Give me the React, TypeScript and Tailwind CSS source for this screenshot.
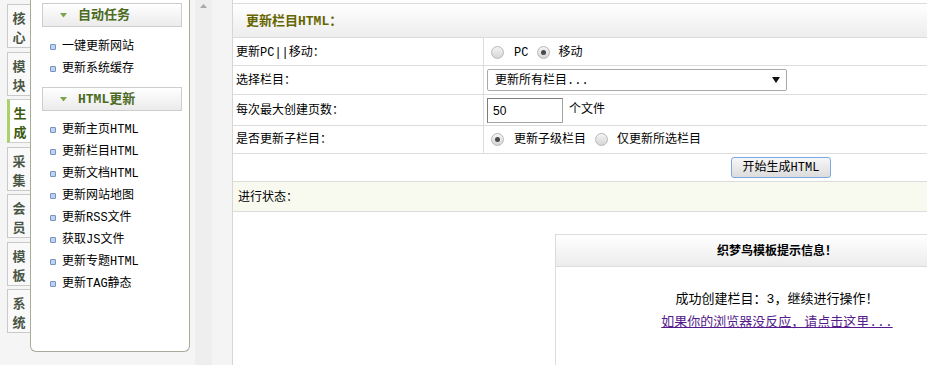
import React from 'react';

const tabs = [
  { label: ['核', '心'] },
  { label: ['模', '块'] },
  { label: ['生', '成'], active: true },
  { label: ['采', '集'] },
  { label: ['会', '员'] },
  { label: ['模', '板'] },
  { label: ['系', '统'] },
];

const autoTasks = ['一键更新网站', '更新系统缓存'];
const htmlTasks = [
  '更新主页HTML',
  '更新栏目HTML',
  '更新文档HTML',
  '更新网站地图',
  '更新RSS文件',
  '获取JS文件',
  '更新专题HTML',
  '更新TAG静态',
];

function Radio({ checked = false }: { checked?: boolean }) {
  return (
    <span className="inline-flex h-[13px] w-[13px] shrink-0 items-center justify-center rounded-full border border-[#b8b8b8] bg-linear-to-b from-[#f4f4f4] to-[#d6d6d6]">
      {checked && <span className="h-[5px] w-[5px] rounded-full bg-[#4a4a4a]" />}
    </span>
  );
}

function SectionHeader({ title }: { title: string }) {
  return (
    <div className="flex h-[24px] items-center gap-[11px] border border-[#cdcdcd] bg-linear-to-b from-white to-[#ebebeb] pl-[17px]">
      <svg width="7" height="5" viewBox="0 0 7 5">
        <path d="M0 0h7L3.5 4.5z" fill="#7aa34a" />
      </svg>
      <span className="pt-[1px] text-[13px] font-bold text-[#4b6b1e]">{title}</span>
    </div>
  );
}

function TaskList({ items }: { items: string[] }) {
  return (
    <ul>
      {items.map(item => (
        <li key={item} className="flex h-[22px] items-center gap-[6px] pl-[8px]">
          <span className="mt-[1px] h-[6px] w-[6px] rounded-[1px] border border-[#7893c0] bg-[#bdd3f3]" />
          <span className="pt-[2px]">{item}</span>
        </li>
      ))}
    </ul>
  );
}

export default function App() {
  return (
    <div className="flex h-[365px] w-[927px] overflow-hidden bg-[#f5f5f5] font-['Liberation_Mono','Noto_Sans_CJK_SC',monospace] text-[12px] text-black">
      {/* left tab strip */}
      <div className="flex w-[30px] shrink-0 flex-col gap-[3.5px] pt-[4px] pl-[7px]">
        {tabs.map(tab => (
          <div
            key={tab.label.join('')}
            className={
              tab.active
                ? 'flex h-[44px] flex-col items-center border border-r-0 border-l-[3px] border-[#cfcfcf] border-l-[#a8d36c] bg-white pt-[5px] text-[13px] leading-[19px] font-bold text-[#3c5a0e]'
                : 'flex h-[44px] flex-col items-center border border-r-0 border-[#c9c9c9] bg-[#f9f9f9] pt-[5px] text-[13px] leading-[19px] font-bold text-[#4a5646]'
            }
          >
            {tab.label.map(ch => (
              <span key={ch}>{ch}</span>
            ))}
          </div>
        ))}
      </div>

      {/* menu panel */}
      <div className="h-[352px] w-[160px] shrink-0 rounded-b-[6px] border border-t-0 border-[#a8ab9a] bg-white pt-[3px] pr-[7px] pl-[11px]">
        <SectionHeader title="自动任务" />
        <div className="mt-[8px]">
          <TaskList items={autoTasks} />
        </div>
        <div className="mt-[8px]">
          <SectionHeader title="HTML更新" />
        </div>
        <div className="mt-[7px]">
          <TaskList items={htmlTasks} />
        </div>
      </div>

      {/* frame gutter */}
      <div className="flex w-[42px] shrink-0">
        <div className="w-[5px]" />
        <div className="flex w-[17px] justify-center bg-[#eeeeee] pt-[4px]">
          <svg width="7" height="4" viewBox="0 0 7 4">
            <path d="M3.5 0L7 4H0z" fill="#a8a8a8" />
          </svg>
        </div>
        <div className="w-[20px] bg-[#f4f4f4]" />
      </div>

      {/* main content */}
      <div className="flex min-w-0 flex-1 flex-col overflow-hidden border-l border-[#d6d6d6] bg-white pt-[3px]">
        <div className="flex h-[35px] shrink-0 items-center border-y border-[#dcdcdc] bg-linear-to-b from-white to-[#ededed] pt-[2px] pl-[13px] text-[13px] font-bold text-[#666600]">
          更新栏目HTML：
        </div>

        <div className="flex h-[28px] shrink-0 border-b border-[#dcdcdc]">
          <div className="flex w-[251px] items-center border-r border-[#dcdcdc] pt-[2px] pl-[3px]">更新PC||移动：</div>
          <div className="flex items-center pt-[1px] pl-[7px]">
            <Radio />
            <span className="ml-[10px] pt-[1px]">PC</span>
            <span className="ml-[9px] flex">
              <Radio checked />
            </span>
            <span className="ml-[8px] pt-[1px]">移动</span>
          </div>
        </div>

        <div className="flex h-[29px] shrink-0 border-b border-[#dcdcdc]">
          <div className="flex w-[251px] items-center border-r border-[#dcdcdc] pt-[1px] pl-[3px]">选择栏目：</div>
          <div className="flex items-center pl-[3px]">
            <div className="flex h-[22px] w-[300px] items-center justify-between rounded-[2px] border border-[#a9a9a9] pr-[6px] pl-[7px]">
              <span className="pt-[1px]">更新所有栏目...</span>
              <svg width="8" height="6" viewBox="0 0 8 6">
                <path d="M0 0h8L4 6z" fill="#111" />
              </svg>
            </div>
          </div>
        </div>

        <div className="flex h-[31px] shrink-0 border-b border-[#dcdcdc]">
          <div className="flex w-[251px] items-center border-r border-[#dcdcdc] pt-[1px] pl-[3px]">每次最大创建页数：</div>
          <div className="flex items-center pl-[3px]">
            <div className="flex h-[25px] w-[76px] items-center border border-[#a3a3a3] border-t-[#7c7c7c] border-l-[#7c7c7c] pt-[1px] pl-[5px] font-['Liberation_Sans',sans-serif]">50</div>
            <span className="ml-[6px]">个文件</span>
          </div>
        </div>

        <div className="flex h-[28px] shrink-0 border-b border-[#dcdcdc]">
          <div className="flex w-[251px] items-center border-r border-[#dcdcdc] pt-[1px] pl-[3px]">是否更新子栏目：</div>
          <div className="flex items-center pl-[7px]">
            <Radio checked />
            <span className="ml-[10px] pt-[1px]">更新子级栏目</span>
            <span className="ml-[9px] flex">
              <Radio />
            </span>
            <span className="ml-[9px] pt-[1px]">仅更新所选栏目</span>
          </div>
        </div>

        <div className="flex h-[28px] shrink-0 items-center border-b border-[#dcdcdc] pl-[498px]">
          <button className="h-[21px] w-[100px] rounded-[3px] border border-[#7ba7e2] bg-linear-to-b from-[#f7f7f7] to-[#dcdcdc] text-[12px]">
            开始生成HTML
          </button>
        </div>

        <div className="flex h-[30px] shrink-0 items-center border-b border-[#dcdcdc] bg-[#f9faef] pt-[2px] pl-[5px]">进行状态：</div>

        <div className="mt-[22px] ml-[322px] w-[444px] shrink-0 border border-[#dcdcdc] bg-white">
          <div className="flex h-[32px] items-center justify-center border-b border-[#dcdcdc] bg-linear-to-b from-white to-[#ececec] pt-[2px] text-[12px] font-bold">
            织梦鸟模板提示信息！
          </div>
          <div className="pt-[21px] text-center text-[13px] leading-[23px]">
            <div>成功创建栏目：3，继续进行操作！</div>
            <a className="text-[#551a8b] underline">如果你的浏览器没反应，请点击这里...</a>
            <div className="h-[40px]" />
          </div>
        </div>
      </div>
    </div>
  );
}
